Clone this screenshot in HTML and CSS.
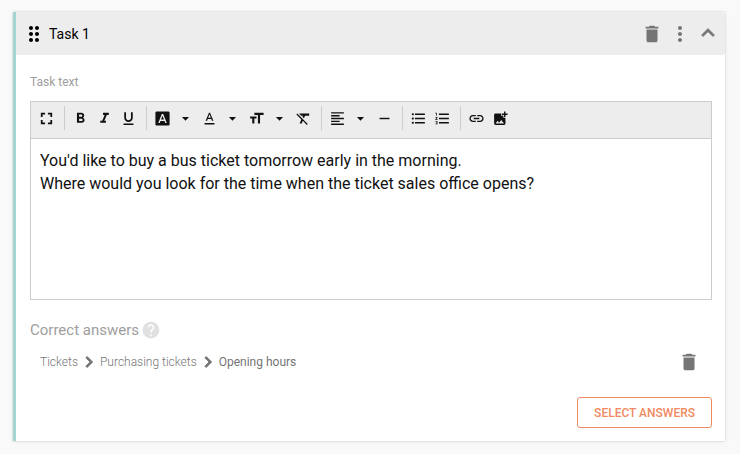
FILE: index.html
```html
<!DOCTYPE html>
<html lang="en">
<head>
    <meta charset="UTF-8">
    <meta name="viewport" content="width=device-width, initial-scale=1.0">
    <title>Task editor</title>
    <link rel="stylesheet" href="styles.css">
</head>
<body>

    <!-- Shared icon shapes -->
    <svg class="sprite" aria-hidden="true">
        <symbol id="trash" viewBox="0 0 24 24"><path d="M6 19c0 1.1.9 2 2 2h8c1.1 0 2-.9 2-2V7H6v12zM19 4h-3.500l-1-1h-5l-1 1H5v2h14V4z"/></symbol>
        <symbol id="caret" viewBox="0 0 24 24"><path d="M7 10l5 5 5-5z"/></symbol>
        <symbol id="chevron" viewBox="0 0 24 24"><path stroke="currentColor" d="M10 6L8.590 7.410 13.170 12l-4.580 4.590L10 18l6-6z"/></symbol>
    </svg>

    <section class="card">
        <header class="card-header">
            <svg class="icon drag" viewBox="0 0 24 24"><path d="M11 18c0 1.100-.9 2-2 2s-2-.9-2-2 .9-2 2-2 2 .9 2 2zm-2-8c-1.100 0-2 .9-2 2s.9 2 2 2 2-.9 2-2-.9-2-2-2zm0-6c-1.100 0-2 .9-2 2s.9 2 2 2 2-.9 2-2-.9-2-2-2zm6 4c1.100 0 2-.9 2-2s-.9-2-2-2-2 .9-2 2 .9 2 2 2zm0 2c-1.100 0-2 .9-2 2s.9 2 2 2 2-.9 2-2-.9-2-2-2zm0 6c-1.100 0-2 .9-2 2s.9 2 2 2 2-.9 2-2-.9-2-2-2z"/></svg>
            <h1 class="card-title">Task 1</h1>
            <div class="card-actions">
                <button type="button" class="icon-button" aria-label="Delete task"><svg class="icon small"><use href="#trash"/></svg></button>
                <button type="button" class="icon-button" aria-label="More"><svg class="icon" viewBox="0 0 24 24"><path d="M12 8c1.100 0 2-.9 2-2s-.9-2-2-2-2 .9-2 2 .9 2 2 2zm0 2c-1.100 0-2 .9-2 2s.9 2 2 2 2-.9 2-2-.9-2-2-2zm0 6c-1.100 0-2 .9-2 2s.9 2 2 2 2-.9 2-2-.9-2-2-2z"/></svg></button>
                <button type="button" class="icon-button" aria-label="Collapse"><svg class="icon large" viewBox="0 0 24 24"><path stroke="currentColor" stroke-width=".6" d="M12 7l-6 6 1.410 1.410L12 9.830l4.590 4.580L18 13z"/></svg></button>
            </div>
        </header>

        <div class="card-body">
            <label class="field-label" for="task-text">Task text</label>

            <div class="editor">
                <div class="toolbar">
                    <button type="button" class="tool" aria-label="Fullscreen"><svg viewBox="0 0 24 24"><path d="M4 4h6v2.500H6.500V10H4zM14 4h6v6h-2.500V6.500H14zM4 14h2.500v3.500H10V20H4zM17.500 14H20v6h-6v-2.500h3.500z"/></svg></button>
                    <span class="separator"></span>
                    <button type="button" class="tool" aria-label="Bold"><svg viewBox="0 0 24 24"><path d="M15.600 10.790c.97-.67 1.650-1.770 1.650-2.790 0-2.260-1.750-4-4-4H7v14h7.040c2.090 0 3.710-1.700 3.710-3.790 0-1.520-.86-2.820-2.150-3.420zM10 6.500h3c.83 0 1.500.67 1.500 1.500s-.67 1.500-1.500 1.500h-3v-3zm3.500 9H10v-3h3.500c.83 0 1.500.67 1.500 1.500s-.67 1.500-1.500 1.500z"/></svg></button>
                    <button type="button" class="tool" aria-label="Italic"><svg viewBox="0 0 24 24"><path d="M10 4v3h2.210l-3.420 8H6v3h8v-3h-2.210l3.420-8H18V4z"/></svg></button>
                    <button type="button" class="tool" aria-label="Underline"><svg viewBox="0 0 24 24"><path d="M12 17c3.310 0 6-2.690 6-6V3h-2.500v8c0 1.930-1.570 3.500-3.500 3.500S8.500 12.930 8.500 11V3H6v8c0 3.310 2.690 6 6 6zm-7 2v2h14v-2H5z"/></svg></button>
                    <span class="separator"></span>
                    <button type="button" class="tool" aria-label="Background color"><svg viewBox="0 0 24 24"><path d="M9.930 13.500h4.140L12 7.980zM20 2H4c-1.100 0-2 .9-2 2v16c0 1.100.9 2 2 2h16c1.100 0 2-.9 2-2V4c0-1.100-.9-2-2-2zm-4.050 16.500l-1.140-3H9.170l-1.120 3H5.960l5.110-13h1.860l5.110 13h-2.090z"/></svg></button>
                    <button type="button" class="tool tool-caret" aria-label="Background color options"><svg><use href="#caret"/></svg></button>
                    <button type="button" class="tool" aria-label="Text color"><svg viewBox="0 0 24 24"><path d="M5 18.500h14v2H5zM9.500 12.800h5l.9 2.200h2.100L12.750 4h-1.500L6.500 15h2.100l.9-2.200zM12 5.980L13.870 11h-3.740L12 5.980z"/></svg></button>
                    <button type="button" class="tool tool-caret" aria-label="Text color options"><svg><use href="#caret"/></svg></button>
                    <button type="button" class="tool" aria-label="Font size"><svg viewBox="0 0 24 24"><path d="M9 4v3h5v12h3V7h5V4H9zm-6 8h3v7h3v-7h3V9H3v3z"/></svg></button>
                    <button type="button" class="tool tool-caret" aria-label="Font size options"><svg><use href="#caret"/></svg></button>
                    <button type="button" class="tool" aria-label="Clear formatting"><svg viewBox="0 0 24 24"><path d="M3.270 5L2 6.270l6.970 6.970L6.500 19h3l1.570-3.660L16.730 21 18 19.730 3.550 5.270 3.270 5zM6 5v.18L8.820 8h2.400l-.72 1.680 2.100 2.100L14.210 8H20V5H6z"/></svg></button>
                    <span class="separator"></span>
                    <button type="button" class="tool" aria-label="Align left"><svg viewBox="0 0 24 24"><path d="M15 15H3v2h12v-2zm0-8H3v2h12V7zM3 13h18v-2H3v2zm0 8h18v-2H3v2zM3 3v2h18V3H3z"/></svg></button>
                    <button type="button" class="tool tool-caret" aria-label="Alignment options"><svg><use href="#caret"/></svg></button>
                    <button type="button" class="tool" aria-label="Horizontal line"><svg viewBox="0 0 24 24"><path d="M5 11h14v2H5z"/></svg></button>
                    <span class="separator"></span>
                    <button type="button" class="tool" aria-label="Bulleted list"><svg viewBox="0 0 24 24"><path d="M4 10.500c-.83 0-1.500.67-1.500 1.500s.67 1.500 1.500 1.500 1.500-.67 1.500-1.500-.67-1.500-1.500-1.500zm0-6c-.83 0-1.500.67-1.500 1.500S3.170 7.500 4 7.500 5.500 6.830 5.500 6 4.830 4.500 4 4.500zm0 12c-.83 0-1.500.68-1.500 1.500s.68 1.500 1.500 1.500 1.500-.68 1.500-1.500-.67-1.500-1.500-1.500zM7 19h14v-2H7v2zm0-6h14v-2H7v2zm0-8v2h14V5H7z"/></svg></button>
                    <button type="button" class="tool" aria-label="Numbered list"><svg viewBox="0 0 24 24"><path d="M2 17h2v.5H3v1h1v.5H2v1h3v-4H2v1zm1-9h1V4H2v1h1v3zm-1 3h1.800L2 13.100v.9h3v-1H3.200L5 10.900V10H2v1zm5-6v2h14V5H7zm0 14h14v-2H7v2zm0-6h14v-2H7v2z"/></svg></button>
                    <span class="separator"></span>
                    <button type="button" class="tool" aria-label="Link"><svg viewBox="0 0 24 24"><path d="M3.900 12c0-1.710 1.390-3.100 3.100-3.100h4V7H7c-2.760 0-5 2.240-5 5s2.240 5 5 5h4v-1.900H7c-1.710 0-3.100-1.390-3.100-3.100zM8 13h8v-2H8v2zm9-6h-4v1.900h4c1.710 0 3.100 1.390 3.100 3.100s-1.390 3.100-3.100 3.100h-4V17h4c2.760 0 5-2.240 5-5s-2.240-5-5-5z"/></svg></button>
                    <button type="button" class="tool" aria-label="Insert image"><svg viewBox="0 0 24 24"><path d="M19 7v2.990s-1.990.01-2 0V7h-3s.01-1.990 0-2h3V2h2v3h3v2h-3zm-3 4V8h-3V5H5c-1.100 0-2 .9-2 2v12c0 1.100.9 2 2 2h12c1.100 0 2-.9 2-2v-8h-3zM5 19l3-4 2 3 3-4 4 5H5z"/></svg></button>
                </div>
                <textarea id="task-text" class="editor-text" rows="6">You'd like to buy a bus ticket tomorrow early in the morning.
Where would you look for the time when the ticket sales office opens?</textarea>
            </div>

            <h2 class="answers-title">
                Correct answers
                <svg class="icon help" viewBox="0 0 24 24"><path d="M12 2C6.480 2 2 6.480 2 12s4.480 10 10 10 10-4.480 10-10S17.520 2 12 2zm1 17h-2v-2h2v2zm2.070-7.750l-.9.920C13.450 12.900 13 13.500 13 15h-2v-.5c0-1.100.45-2.100 1.170-2.830l1.240-1.260c.37-.36.59-.86.59-1.410 0-1.100-.9-2-2-2s-2 .9-2 2H8c0-2.210 1.790-4 4-4s4 1.790 4 4c0 .88-.36 1.680-.93 2.250z"/></svg>
            </h2>

            <div class="answer">
                <span>Tickets</span>
                <svg class="icon crumb"><use href="#chevron"/></svg>
                <span>Purchasing tickets</span>
                <svg class="icon crumb"><use href="#chevron"/></svg>
                <span class="current">Opening hours</span>
                <button type="button" class="icon-button answer-delete" aria-label="Delete answer"><svg class="icon small"><use href="#trash"/></svg></button>
            </div>

            <div class="card-footer">
                <button type="button" class="select-button">SELECT ANSWERS</button>
            </div>
        </div>
    </section>

</body>
</html>
```

FILE: styles.css
```css
* {
    box-sizing: border-box;
}

body {
    margin: 0;
    padding: 12px 15px 12px 13px;
    font-family: Roboto, sans-serif;
    background-color: #f9f9f9;
}

button {
    padding: 0;
    border: none;
    background: none;
    font-family: inherit;
    cursor: pointer;
}

svg {
    display: block;
    fill: currentColor;
}

.sprite {
    display: none;
}

.icon {
    width: 24px;
    height: 24px;
    flex-shrink: 0;
}

.small {
    width: 22px;
    height: 22px;
}

.large {
    width: 26px;
    height: 26px;
}

.card {
    border-left: 3px solid #a3d5d1;
    background-color: #fff;
    box-shadow: 0 0 2px rgba(0, 0, 0, 0.2), 0 2px 6px rgba(0, 0, 0, 0.04);
}

.card-header {
    display: flex;
    align-items: center;
    height: 43px;
    padding: 0 3px 0 6px;
    background-color: #ededed;
    border-radius: 0 3px 3px 0;
}

.card-title {
    margin: 0 0 0 3px;
    font-size: 14px;
    font-weight: 400;
    color: #000;
}

.card-actions {
    display: flex;
    margin-left: auto;
}

.icon-button {
    display: flex;
    align-items: center;
    justify-content: center;
    width: 28px;
    height: 28px;
    color: #757575;
}

.card-body {
    padding: 18px 13px 13px 14px;
}

.field-label {
    display: block;
    font-size: 12px;
    line-height: 18px;
    color: #9e9e9e;
}

.editor {
    margin-top: 10px;
    border: 1px solid #ccc;
}

.toolbar {
    display: flex;
    align-items: center;
    flex-wrap: wrap;
    padding: 3px 3px 7px;
    border-bottom: 1px solid #ccc;
    background-color: #ededed;
}

.tool {
    display: flex;
    align-items: center;
    justify-content: center;
    width: 24px;
    height: 26px;
    color: #111;
}

.tool svg {
    width: 17px;
    height: 17px;
}

.tool-caret {
    width: 23px;
}

.separator {
    width: 1px;
    height: 24px;
    margin: 0 3px 0 6px;
    background-color: #ccc;
}

.editor-text {
    display: block;
    width: 100%;
    height: 160px;
    padding: 10px 9px;
    border: none;
    outline: none;
    resize: none;
    font-family: inherit;
    font-size: 16px;
    line-height: 23px;
    color: #111;
}

.answers-title {
    display: flex;
    align-items: center;
    gap: 2px;
    margin: 20px 0 0;
    font-size: 15px;
    font-weight: 400;
    color: #9e9e9e;
}

.help {
    width: 20px;
    height: 20px;
    color: #e0e0e0;
}

.answer {
    display: flex;
    align-items: center;
    margin-top: 8px;
    padding: 0 9px 0 10px;
    font-size: 12px;
    font-weight: 300;
    color: #757575;
}

.crumb {
    width: 22px;
    height: 22px;
}

.current {
    font-weight: 400;
}

.answer-delete {
    margin-left: auto;
}

.card-footer {
    display: flex;
    justify-content: flex-end;
    margin-top: 21px;
}

.select-button {
    height: 31px;
    padding: 0 16px;
    border: 1px solid #ef8a62;
    border-radius: 3px;
    font-size: 12px;
    font-weight: 500;
    color: #ef8a62;
}
```
